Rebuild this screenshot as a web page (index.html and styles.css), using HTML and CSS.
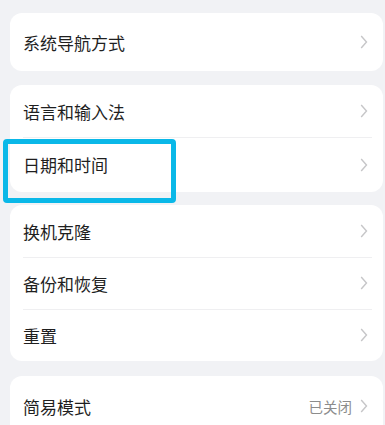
FILE: index.html
```html
<!DOCTYPE html>
<html lang="zh-CN">
<head>
  <meta charset="UTF-8" />
  <meta name="viewport" content="width=device-width, initial-scale=1" />
  <title>系统设置</title>
  <link rel="stylesheet" href="styles.css">
</head>
<body>
  <div class="page">
    <!-- Navigation -->
    <div class="card">
      <div class="row row-tall">
        <span class="label">系统导航方式</span>
        <svg class="chevron" viewBox="0 0 8 14"><path d="M1.2 1 L6.5 7 L1.2 13" /></svg>
      </div>
    </div>

    <!-- Language & time -->
    <div class="card card-lang">
      <div class="row">
        <span class="label">语言和输入法</span>
        <svg class="chevron" viewBox="0 0 8 14"><path d="M1.2 1 L6.5 7 L1.2 13" /></svg>
      </div>
      <div class="row row-date">
        <span class="label">日期和时间</span>
        <svg class="chevron" viewBox="0 0 8 14"><path d="M1.2 1 L6.5 7 L1.2 13" /></svg>
        <div class="highlight"></div>
      </div>
    </div>

    <!-- Data -->
    <div class="card card-data">
      <div class="row">
        <span class="label">换机克隆</span>
        <svg class="chevron" viewBox="0 0 8 14"><path d="M1.2 1 L6.5 7 L1.2 13" /></svg>
      </div>
      <div class="row">
        <span class="label">备份和恢复</span>
        <svg class="chevron" viewBox="0 0 8 14"><path d="M1.2 1 L6.5 7 L1.2 13" /></svg>
      </div>
      <div class="row">
        <span class="label">重置</span>
        <svg class="chevron" viewBox="0 0 8 14"><path d="M1.2 1 L6.5 7 L1.2 13" /></svg>
      </div>
    </div>

    <!-- Simple mode -->
    <div class="card card-simple">
      <div class="row row-simple">
        <span class="label">简易模式</span>
        <span class="value">已关闭</span>
        <svg class="chevron" viewBox="0 0 8 14"><path d="M1.2 1 L6.5 7 L1.2 13" /></svg>
      </div>
    </div>
  </div>
</body>
</html>
```

FILE: styles.css
```css
/* Global */
body {
  margin: 0;
  background: #f1f2f5;
  font-family: "Noto Sans CJK SC", "Noto Sans", sans-serif;
  overflow: hidden;
}
.page {
  padding: 13px 2px 0 10px;
}
/* White rounded group */
.card {
  background: #fff;
  border-radius: 12px;
  margin-bottom: 14px;
}
.card-lang {
  margin-bottom: 13px;
}
.card-data {
  margin-bottom: 15px;
}
.row {
  position: relative;
  display: flex;
  align-items: center;
  height: 52px;
  padding: 0 15px 0 13px;
}
.row + .row::before {
  content: "";
  position: absolute;
  top: 0;
  left: 13px;
  right: 11px;
  height: 1px;
  background: #efeff1;
}
.row-tall {
  height: 58px;
}
.row-date {
  height: 55px;
}
.row-simple {
  height: 60px;
}
.label {
  flex: 1;
  font-size: 17px;
  color: #1f1f1f;
}
.value {
  font-size: 14.5px;
  color: #8c8c8c;
  margin-right: 8px;
}
/* Arrow on the right */
.chevron {
  width: 8px;
  height: 14px;
  fill: none;
  stroke: #c6c6c8;
  stroke-width: 1.4;
}
/* Cyan annotation frame */
.highlight {
  position: absolute;
  top: 2px;
  left: -7px;
  width: 173px;
  height: 64px;
  box-sizing: border-box;
  border: 5px solid #0ab8e8;
  border-radius: 4px;
}
```
